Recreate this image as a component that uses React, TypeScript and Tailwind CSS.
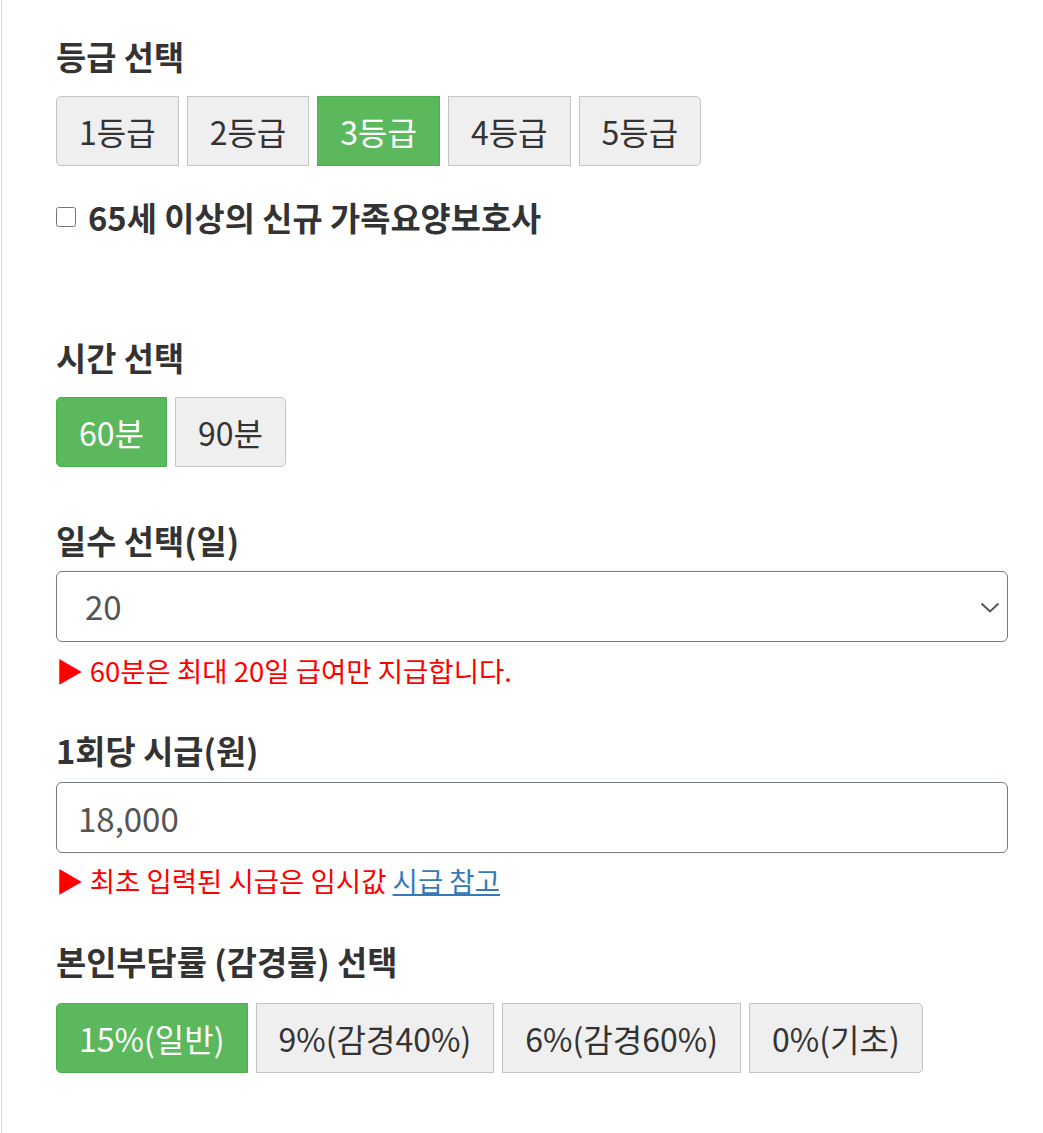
import { useState } from 'react';

const FONT = "font-['Noto_Sans_CJK_KR','Noto_Sans',sans-serif]";

interface Option {
    label: string;
    value: string;
}

function ButtonGroup({ options, value, onChange }: { options: Option[]; value: string; onChange: (v: string) => void }) {
    return (
        <div className="flex gap-2">
            {options.map((opt, i) => {
                const active = opt.value === value;
                const first = i === 0;
                const last = i === options.length - 1;
                return (
                    <button
                        key={opt.value}
                        type="button"
                        onClick={() => onChange(opt.value)}
                        className={[
                            'h-[70px] px-[22px] border text-[32px] leading-[40px] whitespace-nowrap',
                            active ? 'bg-[#5cb85c] border-[#4cae4c] text-white' : 'bg-[#efefef] border-[#c4c4c4] text-[#333]',
                            first ? 'rounded-l-[5px]' : '',
                            last ? 'rounded-r-[5px]' : '',
                        ].join(' ')}
                    >
                        {opt.label}
                    </button>
                );
            })}
        </div>
    );
}

export default function App() {
    const [grade, setGrade] = useState('3');
    const [time, setTime] = useState('60');
    const [days, setDays] = useState('20');
    const [wage, setWage] = useState('18,000');
    const [rate, setRate] = useState('15');
    const [family, setFamily] = useState(false);

    return (
        <div className={`${FONT} h-[1133px] overflow-hidden bg-white`}>
            <div className="ml-[1px] h-full border-l border-[#dcdcdc] pl-[54px] pr-[35px] pt-[36px]">
                <h4 className="text-[32.8px] leading-[40px] font-bold text-[#333]">등급 선택</h4>
                <div className="mt-[20px]">
                    <ButtonGroup
                        options={['1', '2', '3', '4', '5'].map((g) => ({ label: `${g}등급`, value: g }))}
                        value={grade}
                        onChange={setGrade}
                    />
                </div>
                <label className="mt-[31px] flex items-center h-[40px] cursor-pointer">
                    <input
                        type="checkbox"
                        checked={family}
                        onChange={(e) => setFamily(e.target.checked)}
                        className="w-[20px] h-[20px] m-0 mr-[12px]"
                    />
                    <span className="text-[32.8px] leading-[40px] font-bold text-[#333]">65세 이상의 신규 가족요양보호사</span>
                </label>

                <h4 className="mt-[100px] text-[32.8px] leading-[40px] font-bold text-[#333]">시간 선택</h4>
                <div className="mt-[20px]">
                    <ButtonGroup
                        options={[
                            { label: '60분', value: '60' },
                            { label: '90분', value: '90' },
                        ]}
                        value={time}
                        onChange={setTime}
                    />
                </div>

                <h4 className="mt-[53px] text-[32.8px] leading-[40px] font-bold text-[#333]">일수 선택(일)</h4>
                <div className="relative mt-[11px]">
                    <select
                        value={days}
                        onChange={(e) => setDays(e.target.value)}
                        className="w-full h-[71px] appearance-none rounded-[6px] border border-[#737a84] bg-white pl-[28px] text-[33px] text-[#555] outline-none"
                    >
                        {Array.from({ length: 20 }, (_, i) => String(i + 1)).map((d) => (
                            <option key={d} value={d}>{d}</option>
                        ))}
                    </select>
                    <svg className="pointer-events-none absolute right-[8px] top-[31px]" width="20" height="11" viewBox="0 0 20 11" fill="none">
                        <path d="M1.5 1.5L10 9.5L18.5 1.5" stroke="#555" strokeWidth="2" />
                    </svg>
                </div>
                <p className="mt-[10px] text-[27.5px] leading-[36px] text-[#ff0000]">▶ 60분은 최대 20일 급여만 지급합니다.</p>

                <h4 className="mt-[42px] text-[32.8px] leading-[40px] font-bold text-[#333]">1회당 시급(원)</h4>
                <input
                    type="text"
                    value={wage}
                    onChange={(e) => setWage(e.target.value)}
                    className="mt-[12px] block w-full h-[71px] rounded-[6px] border border-[#737a84] bg-white px-[21px] text-[33px] text-[#555] outline-none"
                />
                <p className="mt-[9px] text-[27.5px] leading-[36px] text-[#ff0000]">
                    ▶ 최초 입력된 시급은 임시값 <a href="#" className="text-[#337ab7] underline">시급 참고</a>
                </p>

                <h4 className="mt-[43px] text-[32.8px] leading-[40px] font-bold text-[#333]">본인부담률 (감경률) 선택</h4>
                <div className="mt-[22px]">
                    <ButtonGroup
                        options={[
                            { label: '15%(일반)', value: '15' },
                            { label: '9%(감경40%)', value: '9' },
                            { label: '6%(감경60%)', value: '6' },
                            { label: '0%(기초)', value: '0' },
                        ]}
                        value={rate}
                        onChange={setRate}
                    />
                </div>
            </div>
        </div>
    );
}
